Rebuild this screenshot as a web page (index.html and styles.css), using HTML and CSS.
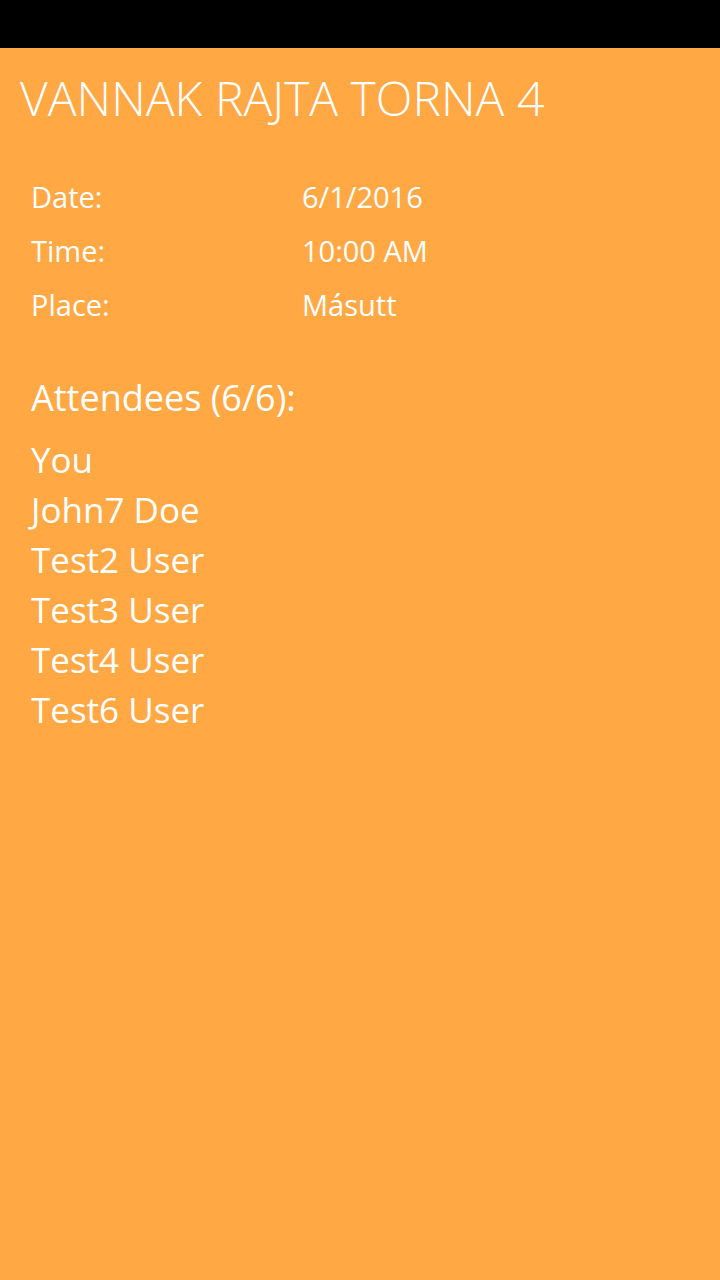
FILE: index.html
```html
<!DOCTYPE html>
<html>
<head>
<meta charset="utf-8">
<link rel="stylesheet" href="styles.css">
</head>
<body>
<div class="statusbar"></div>
<main class="page">
  <h1 class="title">VANNAK RAJTA TORNA 4</h1>
  <div class="details">
    <div class="label">Date:</div><div class="value">6/1/2016</div>
    <div class="label">Time:</div><div class="value">10:00 AM</div>
    <div class="label">Place:</div><div class="value">Másutt</div>
  </div>
  <h2 class="attendees-head">Attendees (6/6):</h2>
  <ul class="attendees">
    <li>You</li>
    <li>John7 Doe</li>
    <li>Test2 User</li>
    <li>Test3 User</li>
    <li>Test4 User</li>
    <li>Test6 User</li>
  </ul>
</main>
</body>
</html>
```

FILE: styles.css
```css
html, body {
  margin: 0;
  padding: 0;
  height: 100%;
}
body {
  background: #ffa844;
  color: #fff;
  font-family: "Open Sans", "Noto Sans", sans-serif;
  display: flex;
  flex-direction: column;
}
.statusbar {
  height: 48px;
  background: #000;
  flex: none;
}
.page {
  flex: 1;
  padding: 0 20px;
}
.title {
  margin: 0;
  padding-top: 22px;
  font-size: 48px;
  font-weight: 300;
  line-height: 56px;
}
.details {
  display: grid;
  grid-template-columns: 271px 1fr;
  margin-top: 44px;
  padding-left: 11px;
  font-size: 29px;
  font-weight: 400;
  line-height: 54px;
}
.attendees-head {
  margin: 41px 0 0 11px;
  font-size: 36px;
  font-weight: 400;
  line-height: 50px;
}
.attendees {
  list-style: none;
  margin: 12px 0 0 11px;
  padding: 0;
  font-size: 35px;
  line-height: 50px;
}
```
